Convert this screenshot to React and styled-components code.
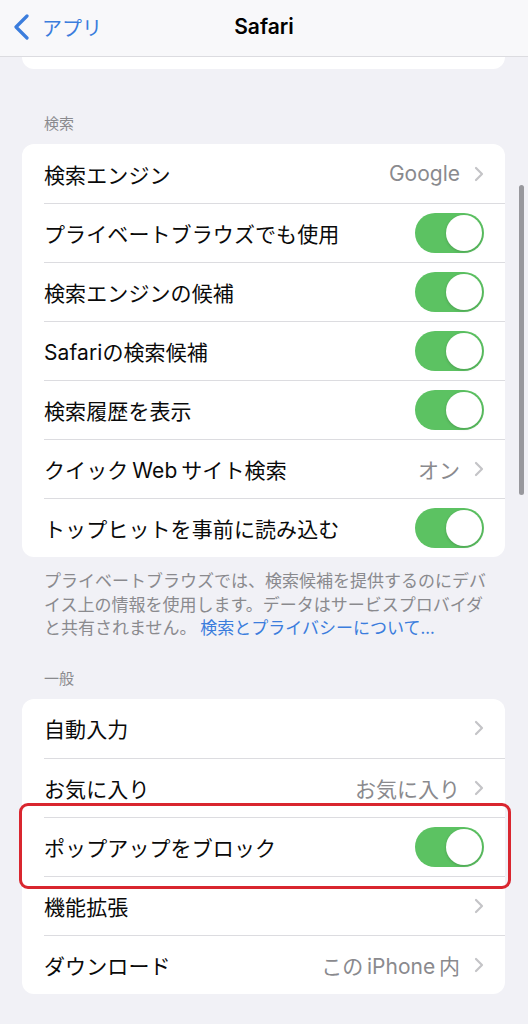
import styled, { createGlobalStyle } from "styled-components";

const GlobalStyle = createGlobalStyle`
    * { box-sizing: border-box; }
    body {
        margin: 0;
        background: #f1f1f6;
        font-family: "Inter", "Noto Sans CJK JP", sans-serif;
        -webkit-font-smoothing: antialiased;
    }
`

const Screen = styled.div`
    position: relative;
    width: 528px;
    height: 1024px;
    overflow: hidden;
    background: #f1f1f6;
`

const NavBar = styled.header`
    height: 57px;
    display: grid;
    grid-template-columns: 1fr auto 1fr;
    align-items: center;
    background: #f8f8fa;
    border-bottom: 1px solid #dcdce0;
    padding: 0 12px;
`

const BackButton = styled.div`
    display: flex;
    align-items: center;
    gap: 12px;
    color: #3b7ddd;
    font-size: 20px;
    margin-top: -2px;
`

const Title = styled.h1`
    margin: 0;
    font-size: 21px;
    font-weight: 600;
    color: #000;
    margin-top: -4px;
`

const CardTail = styled.div`
    height: 12px;
    margin: 0 23px 0 22px;
    background: #fff;
    border-radius: 0 0 12px 12px;
`

const SectionLabel = styled.div`
    padding: ${p => p.$top}px 44px 0;
    font-size: 15px;
    line-height: 18px;
    color: #8a8a8e;
    margin-bottom: 11px;
`

const Card = styled.div`
    margin: 0 23px 0 22px;
    background: #fff;
    border-radius: 12px;
`

const Row = styled.div`
    position: relative;
    height: 59px;
    display: flex;
    align-items: center;
    padding-left: 22px;

    & + & > div:first-child {
        border-top: 1px solid #dcdce0;
    }
`

const RowInner = styled.div`
    flex: 1;
    align-self: stretch;
    display: flex;
    align-items: center;
    justify-content: space-between;
    padding-right: 21px;
`

const Label = styled.span`
    font-size: 21px;
    color: #0a0a0a;
    letter-spacing: 0.1px;
`

const Accessory = styled.div`
    display: flex;
    align-items: center;
    gap: 14px;
`

const Value = styled.span`
    font-size: 21px;
    color: #8a8a8e;
`

const Toggle = styled.div`
    width: 69px;
    height: 40px;
    border-radius: 20px;
    background: #5cc262;
    padding: 2px;
    display: flex;
    justify-content: flex-end;
`

const Knob = styled.div`
    width: 36px;
    height: 36px;
    border-radius: 50%;
    background: #fff;
    box-shadow: 0 1px 3px rgba(0, 0, 0, 0.18);
`

const Footer = styled.div`
    padding: 11px 34px 0 44px;
    font-size: 17px;
    line-height: 23.5px;
    color: #8a8a8e;
    font-family: "Noto Sans CJK JP", sans-serif;
`

const Link = styled.span`
    color: #3b7ddd;
`

const Highlight = styled.div`
    position: absolute;
    top: -14px;
    bottom: -13px;
    left: -3px;
    right: -6px;
    border: 3px solid #d9262f;
    border-radius: 9px;
    pointer-events: none;
`

const ScrollBar = styled.div`
    position: absolute;
    left: 519px;
    top: 185px;
    width: 5px;
    height: 310px;
    border-radius: 3px;
    background: #98989d;
`

const Chevron = () => (
    <svg width="10" height="16" viewBox="0 0 10 16">
        <polyline points="2,2 8,8 2,14" fill="none" stroke="#c4c4c7" strokeWidth="2.2" strokeLinecap="round" strokeLinejoin="round" />
    </svg>
)

const BackChevron = () => (
    <svg width="18" height="26" viewBox="0 0 18 26">
        <polyline points="15,2 4,13 15,24" fill="none" stroke="#3b7ddd" strokeWidth="3.2" strokeLinecap="round" strokeLinejoin="round" />
    </svg>
)

function SettingRow({ label, value, toggle, chevron, highlight }) {
    return (
        <Row>
            <RowInner>
                <Label>{label}</Label>
                <Accessory>
                    {value && <Value>{value}</Value>}
                    {toggle && <Toggle><Knob /></Toggle>}
                    {chevron && <Chevron />}
                </Accessory>
            </RowInner>
            {highlight && <Highlight />}
        </Row>
    )
}

const busca = [
    { label: "検索エンジン", value: "Google", chevron: true },
    { label: "プライベートブラウズでも使用", toggle: true },
    { label: "検索エンジンの候補", toggle: true },
    { label: "Safariの検索候補", toggle: true },
    { label: "検索履歴を表示", toggle: true },
    { label: "クイック\u2009Web\u2009サイト検索", value: "オン", chevron: true },
    { label: "トップヒットを事前に読み込む", toggle: true },
]

const geral = [
    { label: "自動入力", chevron: true },
    { label: "お気に入り", value: "お気に入り", chevron: true },
    { label: "ポップアップをブロック", toggle: true, highlight: true },
    { label: "機能拡張", chevron: true },
    { label: "ダウンロード", value: "この\u2009iPhone\u2009内", chevron: true },
]

export default function App() {
    return (
        <Screen>
            <GlobalStyle />
            <NavBar>
                <BackButton>
                    <BackChevron />
                    <span>アプリ</span>
                </BackButton>
                <Title>Safari</Title>
                <div />
            </NavBar>
            <CardTail />

            <SectionLabel $top={46}>検索</SectionLabel>
            <Card>
                {busca.map(item => <SettingRow key={item.label} {...item} />)}
            </Card>
            <Footer>
                プライベートブラウズでは、検索候補を提供するのにデバイス上の情報を使用します。データはサービスプロバイダと共有されません。<Link> 検索とプライバシーについて...</Link>
            </Footer>

            <SectionLabel $top={31}>一般</SectionLabel>
            <Card>
                {geral.map(item => <SettingRow key={item.label} {...item} />)}
            </Card>
            <ScrollBar />
        </Screen>
    )
}
